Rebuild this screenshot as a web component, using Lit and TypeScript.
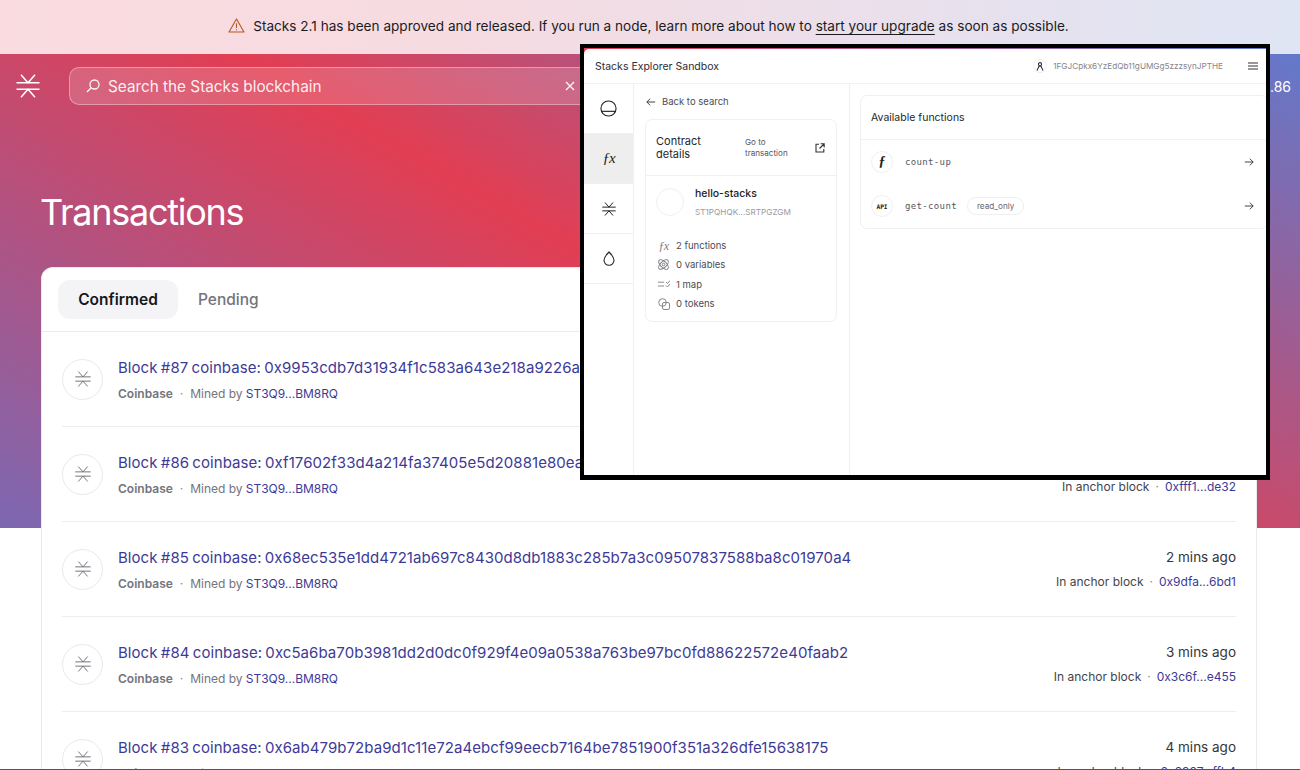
import { LitElement, html, css } from "lit";
import { customElement } from "lit/decorators.js";

const logo = (size: number, cls = "", sw = 1.5) => html`<svg class=${cls} width=${size} height=${size} viewBox="0 0 24 24" fill="none" stroke="currentColor" stroke-width=${sw}><path d="M0.5 8.8H23.5M0.5 15.2H23.5M5 0.8L12 8.8L19 0.8M5 23.2L12 15.2L19 23.2"/></svg>`;

const rows = [
  { title: "Block #87 coinbase: 0x9953cdb7d31934f1c583a643e218a9226a0f71b2c4d8e6530a17bc94f2e1d706", time: "1 min ago", anchor: "0x7c1e...a0b3" },
  { title: "Block #86 coinbase: 0xf17602f33d4a214fa37405e5d20881e80ea9c3b15d72e6048f1a96cd307be2c1", time: "1 min ago", anchor: "0xfff1...de32" },
  { title: "Block #85 coinbase: 0x68ec535e1dd4721ab697c8430d8db1883c285b7a3c09507837588ba8c01970a4", time: "2 mins ago", anchor: "0x9dfa...6bd1" },
  { title: "Block #84 coinbase: 0xc5a6ba70b3981dd2d0dc0f929f4e09a0538a763be97bc0fd88622572e40faab2", time: "3 mins ago", anchor: "0x3c6f...e455" },
  { title: "Block #83 coinbase: 0x6ab479b72ba9d1c11e72a4ebcf99eecb7164be7851900f351a326dfe15638175", time: "4 mins ago", anchor: "0x6987...ffb4" },
];

@customElement("app-root")
export class AppRoot extends LitElement {
  static styles = css`
    :host { display: block; width: 1300px; height: 770px; overflow: hidden; position: relative; background: #fff; font-family: Inter, "Liberation Sans", sans-serif; box-sizing: border-box; border-bottom: 1px solid #555; }
    * { box-sizing: border-box; }
    svg { display: block; flex: none; }
    .banner { height: 54px; display: flex; align-items: center; justify-content: center; gap: 8px; font-size: 13.6px; color: #1b1b1f; background: linear-gradient(90deg, #fadcdf 0%, #f6dbe1 35%, #e9e0ec 70%, #dfe5f4 100%); padding: 0 3px 3px 0; }
    .banner svg { color: #b5591c; }
    .banner u { text-underline-offset: 3px; text-decoration-thickness: 1px; }
    .page { background: linear-gradient(30deg, #7c68b2 0%, #e23e53 50%, #6279cb 100%) no-repeat; background-size: 100% 474px; padding: 13px 9px 0 16px; }
    .top { display: flex; align-items: center; height: 38px; color: #fff; }
    .top .mark { margin-right: 29px; }
    .search { width: 523px; height: 38px; flex: none; display: flex; align-items: center; gap: 7px; padding: 0 15px; border-radius: 10px; border: 1px solid rgba(255,255,255,.35); background: rgba(255,255,255,.16); font-size: 15.3px; color: rgba(255,255,255,.92); }
    .search span { flex: 1; }
    .price { margin-left: auto; font-size: 14px; }
    h1 { margin: 66px 0 0; font-weight: 400; font-size: 36px; letter-spacing: -1.25px; line-height: 44px; color: #fff; padding: 19px 0 0 24px; }
    .card { margin: 33px 34px 0 25px; background: #fff; border: 1px solid #ebebef; border-bottom: 0; border-radius: 12px 12px 0 0; height: 520px; }
    .tabs { height: 64px; padding: 12px 16px; display: flex; gap: 20px; border-bottom: 1px solid #ebebef; font-size: 15.5px; font-weight: 500; color: #74747c; }
    .tabs div { display: flex; align-items: center; height: 39px; }
    .tabs .on { width: 120px; justify-content: center; background: #f4f4f6; border-radius: 12px; color: #17171c; font-weight: 600; }
    .rows { padding: 0 20px; }
    .row { height: 95px; display: flex; align-items: center; gap: 15px; border-bottom: 1px solid #eeeef1; }
    .circle { width: 41px; height: 41px; flex: none; border-radius: 50%; border: 1px solid #e9e9ec; display: flex; align-items: center; justify-content: center; color: #6b6b72; }
    .main { flex: 1; min-width: 0; display: flex; flex-direction: column; gap: 7px; padding-top: 2px; }
    .t { font-size: 15px; letter-spacing: .06px; word-spacing: -1px; line-height: 20px; color: #3d3a96; white-space: nowrap; }
    .s { font-size: 12px; line-height: 18px; color: #74747c; white-space: nowrap; display: flex; gap: 7px; }
    .s b { font-weight: 600; }
    .s .by { letter-spacing: -.03px; }
    .s a, .r a { color: #3d3a96; }
    .r { display: flex; flex-direction: column; gap: 6px; align-items: flex-end; flex: none; }
    .time { font-size: 13.5px; line-height: 20px; color: #34343a; }
    .anchor { font-size: 12px; line-height: 18px; color: #44444b; display: flex; gap: 6px; }
    .dot { color: #8a8a90; }

    .sandbox { position: absolute; left: 580px; top: 44px; width: 690px; height: 436px; border: solid #000; border-width: 4px 4px 5px 4px; background: linear-gradient(90deg, #e53e52, #6279cb); padding-top: 1px; overflow: hidden; color: #26262b; }
    .win { height: 100%; background: #fff; border-radius: 5px 0 0 0; display: flex; flex-direction: column; }
    .shead { height: 35px; flex: none; display: flex; align-items: center; padding: 0 8px 0 11px; border-bottom: 1px solid #f2f2f4; font-size: 10.5px; color: #2d2d33; }
    .shead .name { flex: 1; }
    .who { display: flex; align-items: center; gap: 6px; font-size: 8.2px; color: #85858c; margin-right: 25px; }
    .mini { width: 14px; height: 14px; border-radius: 50%; border: 1px solid #eeeef0; display: flex; align-items: center; justify-content: center; color: #333; }
    .sbody { flex: 1; display: flex; min-height: 0; }
    .side { width: 50px; flex: none; border-right: 1px solid #f0f0f2; }
    .side div { height: 50px; display: flex; align-items: center; justify-content: center; border-bottom: 1px solid #f0f0f2; color: #222; }
    .side .act { background: #eeeeef; padding-bottom: 1px; }
    .side .drop { padding-bottom: 1px; }
    .fx { font-family: "Liberation Serif", serif; font-style: italic; font-size: 15px; letter-spacing: -1.2px; }
    .mid { width: 216px; flex: none; border-right: 1px solid #f0f0f2; padding: 0 12px 0 11px; }
    .back { height: 35px; display: flex; align-items: center; gap: 6px; font-size: 9.5px; color: #4c4c54; margin-left: 1px; }
    .cc { border: 1px solid #f0f0f2; border-radius: 7px; height: 203px; }
    .cch { height: 56px; display: flex; align-items: center; padding: 0 11px 0 10px; border-bottom: 1px solid #f0f0f2; }
    .cch .l { width: 89px; font-size: 11px; line-height: 13px; color: #26262b; }
    .cch .g { flex: 1; font-size: 8.1px; line-height: 11px; color: #55555c; }
    .who2 { display: flex; gap: 11px; padding: 12px 10px 0; height: 60px; }
    .ring { width: 28px; height: 28px; border-radius: 50%; border: 1px solid #f0f0f2; flex: none; }
    .who2 b { display: block; font-size: 10.5px; font-weight: 500; line-height: 12px; color: #222; }
    .who2 small { display: block; font-size: 8.2px; color: #9a9aa2; margin-top: 6px; line-height: 12px; }
    .stats { padding: 0 0 0 11px; display: flex; flex-direction: column; }
    .stat { height: 19.3px; display: flex; align-items: center; gap: 6px; font-size: 9.5px; color: #4c4c54; }
    .stat .ic { width: 13px; display: flex; justify-content: center; color: #7d7d85; }
    .stat .fx { font-size: 12px; line-height: 12px; letter-spacing: -.6px; }
    .right { flex: 1; min-width: 0; padding: 11px 0 0 10px; }
    .fc { border: 1px solid #f0f0f2; border-radius: 7px; height: 134px; margin-right: -2px; }
    .fch { height: 44px; display: flex; align-items: center; padding-left: 10px; font-size: 10.5px; border-bottom: 1px solid #f2f2f4; color: #26262b; }
    .fr { height: 44px; display: flex; align-items: center; padding: 0 13px 0 10px; gap: 12px; font-family: "DejaVu Sans Mono", monospace; font-size: 9px; color: #55555c; }
    .fr .c { width: 22px; height: 22px; border-radius: 50%; border: 1px solid #f0f0f2; display: flex; align-items: center; justify-content: center; color: #222; flex: none; }
    .fr .name { letter-spacing: .35px; }
    .pill { border: 1px solid #efeff1; border-radius: 9px; font-family: Inter, sans-serif; font-size: 8.2px; height: 18px; padding: 0 9px; display: flex; align-items: center; color: #66666e; margin-left: -2px; }
    .sp { flex: 1; }
    .api { font-size: 6.2px; font-weight: 700; letter-spacing: -.1px; }
    .f { font-family: "Liberation Serif", serif; font-style: italic; font-weight: 700; font-size: 14px; }
  `;

  arrow(dir: "l" | "r", size = 10) {
    const d = dir === "r" ? "M1 6H11M7 2L11 6L7 10" : "M11 6H1M5 2L1 6L5 10";
    return html`<svg width=${size} height=${size} viewBox="0 0 12 12" fill="none" stroke="#333" stroke-width="1.1"><path d=${d}/></svg>`;
  }

  render() {
    return html`
      <div class="banner">
        <svg width="17" height="15" viewBox="0 0 17 15" fill="none" stroke="currentColor" stroke-width="1.1"><path d="M8.5 1L16 14H1Z" stroke-linejoin="round"/><path d="M8.5 5.2V10M8.5 11.2V12.2"/></svg>
        <span>Stacks 2.1 has been approved and released. If you run a node, learn more about how to <u>start your upgrade</u> as soon as possible.</span>
      </div>
      <div class="page">
        <div class="top">
          ${logo(24, "mark")}
          <div class="search">
            <svg width="16" height="16" viewBox="0 0 16 16" fill="none" stroke="currentColor" stroke-width="1.3"><circle cx="9.5" cy="6.5" r="4.5"/><path d="M6.2 9.8L2 14"/></svg>
            <span>Search the Stacks blockchain</span>
            <svg width="12" height="12" viewBox="0 0 12 12" fill="none" stroke="currentColor" stroke-width="1.4"><path d="M2 2L10 10M10 2L2 10"/></svg>
          </div>
          <div class="price">$0.86</div>
        </div>
        <h1>Transactions</h1>
        <div class="card">
          <div class="tabs"><div class="on">Confirmed</div><div>Pending</div></div>
          <div class="rows">
            ${rows.map((r) => html`
              <div class="row">
                <div class="circle">${logo(16, "", 1.4)}</div>
                <div class="main">
                  <div class="t">${r.title}</div>
                  <div class="s"><b>Coinbase</b><span class="dot">·</span><span class="by">Mined by <a>ST3Q9...BM8RQ</a></span></div>
                </div>
                <div class="r">
                  <div class="time">${r.time}</div>
                  <div class="anchor"><span>In anchor block</span><span class="dot">·</span><a>${r.anchor}</a></div>
                </div>
              </div>`)}
          </div>
        </div>
      </div>
      ${this.sandbox()}
    `;
  }

  sandbox() {
    return html`
      <div class="sandbox"><div class="win">
        <div class="shead">
          <div class="name">Stacks Explorer Sandbox</div>
          <div class="who">
            <div class="mini"><svg width="8" height="9" viewBox="0 0 8 9" fill="none" stroke="currentColor" stroke-width="1.1"><circle cx="4" cy="2.2" r="1.6"/><path d="M1 8.5L3 4.2H5L7 8.5"/></svg></div>
            <span>1FGJCpkx6YzEdQb11gUMGg5zzzsynJPTHE</span>
          </div>
          <svg width="10" height="8" viewBox="0 0 10 8" stroke="#333" stroke-width="1"><path d="M0 1H10M0 4H10M0 7H10"/></svg>
        </div>
        <div class="sbody">
          <div class="side">
            <div><svg width="17" height="17" viewBox="0 0 18 18" fill="none" stroke="#222" stroke-width="1.2"><circle cx="9" cy="9" r="8"/><path d="M1.6 12H16.4"/></svg></div>
            <div class="act"><span class="fx">ƒx</span></div>
            <div>${logo(14, "", 1.7)}</div>
            <div class="drop"><svg width="12" height="15" viewBox="0 0 12 15" fill="none" stroke="#222" stroke-width="1.1"><path d="M6 1C6 1 1 6 1 9.3A5 5 0 0 0 11 9.3C11 6 6 1 6 1Z"/></svg></div>
          </div>
          <div class="mid">
            <div class="back">${this.arrow("l")}<span>Back to search</span></div>
            <div class="cc">
              <div class="cch">
                <div class="l">Contract<br />details</div>
                <div class="g">Go to<br />transaction</div>
                <svg width="10" height="10" viewBox="0 0 10 10" fill="none" stroke="#333" stroke-width="1.1"><path d="M4 1.2H1V9H8.8V6M5.6 .8H9.2V4.4M9 1L4.5 5.5"/></svg>
              </div>
              <div class="who2">
                <div class="ring"></div>
                <div><b>hello-stacks</b><small>ST1PQHQK...SRTPGZGM</small></div>
              </div>
              <div class="stats">
                <div class="stat"><span class="ic"><span class="fx">ƒx</span></span>2 functions</div>
                <div class="stat"><span class="ic"><svg width="13" height="13" viewBox="0 0 12 12" fill="none" stroke="currentColor" stroke-width=".9"><ellipse cx="6" cy="6" rx="5.6" ry="2.8" transform="rotate(45 6 6)"/><ellipse cx="6" cy="6" rx="5.6" ry="2.8" transform="rotate(-45 6 6)"/><circle cx="6" cy="6" r="1.2"/></svg></span>0 variables</div>
                <div class="stat"><span class="ic"><svg width="12" height="8" viewBox="0 0 12 8" fill="none" stroke="currentColor" stroke-width=".9"><path d="M0 2.2H6M0 6H6M8 2L9.5 3.5L12 .5M8 5.5L9.5 7L12 4"/></svg></span>1 map</div>
                <div class="stat"><span class="ic"><svg width="12" height="12" viewBox="0 0 12 12" fill="none" stroke="currentColor" stroke-width=".9"><circle cx="4.5" cy="4.5" r="3.8"/><rect x="4.5" y="4.5" width="7" height="7" rx="1.5"/></svg></span>0 tokens</div>
              </div>
            </div>
          </div>
          <div class="right">
            <div class="fc">
              <div class="fch">Available functions</div>
              <div class="fr"><div class="c"><span class="f">ƒ</span></div><span class="name">count-up</span><span class="sp"></span>${this.arrow("r")}</div>
              <div class="fr"><div class="c"><span class="api">API</span></div><span class="name">get-count</span><span class="pill">read_only</span><span class="sp"></span>${this.arrow("r")}</div>
            </div>
          </div>
        </div>
      </div></div>
    `;
  }
}
